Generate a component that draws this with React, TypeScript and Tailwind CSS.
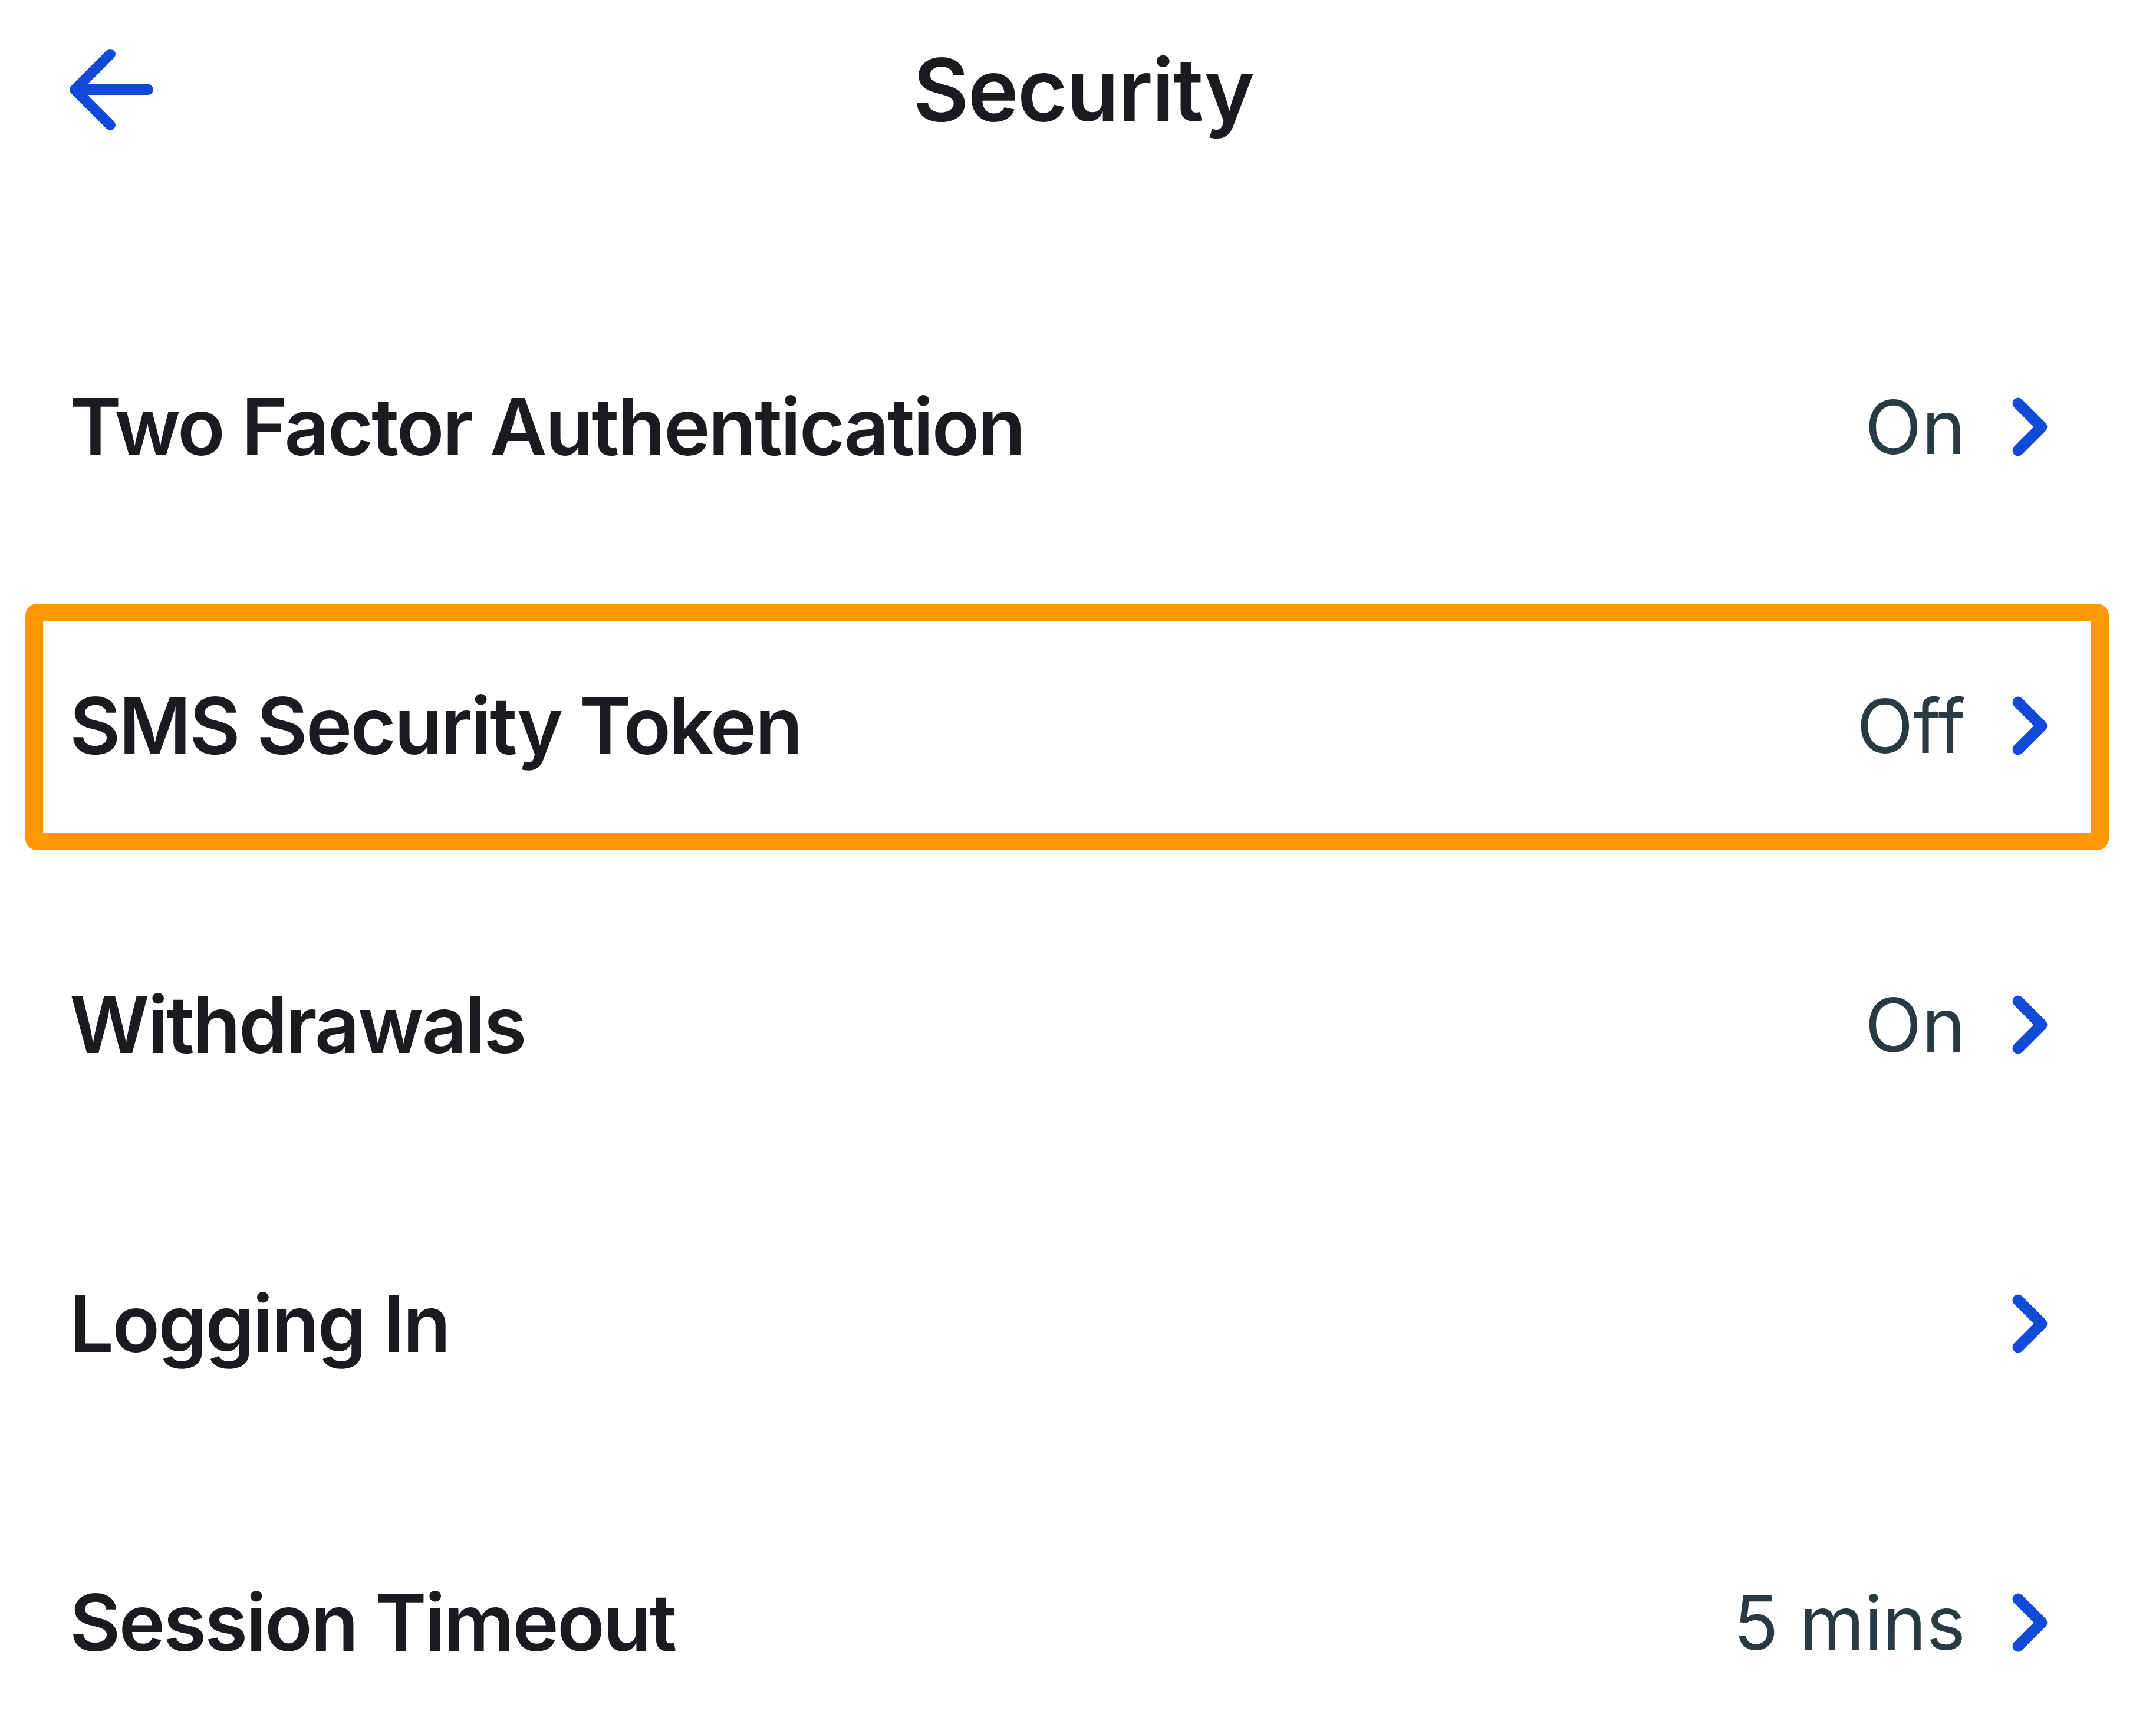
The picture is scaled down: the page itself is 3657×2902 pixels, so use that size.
import React from "react";

function Chevron() {
  return (
    <svg width="60" height="100" viewBox="0 0 60 100" fill="none" className="shrink-0">
      <polyline points="10,10 50,50 10,90" stroke="#1149d8" strokeWidth="19" strokeLinecap="round" strokeLinejoin="round" />
    </svg>
  );
}

function BackArrow() {
  return (
    <svg width="142" height="138" viewBox="0 0 142 138" fill="none">
      <path d="M133 69H9M69 9L9 69L69 129" stroke="#1149d8" strokeWidth="18" strokeLinecap="round" strokeLinejoin="round" />
    </svg>
  );
}

type Row = { label: string; value?: string; highlight?: boolean };

const rows: Row[] = [
  { label: "Two Factor Authentication", value: "On" },
  { label: "SMS Security Token", value: "Off", highlight: true },
  { label: "Withdrawals", value: "On" },
  { label: "Logging In" },
  { label: "Session Timeout", value: "5 mins" },
];

export default function App() {
  return (
    <div className="w-[3657px] h-[2902px] bg-white overflow-hidden" style={{ fontFamily: "Inter, 'Noto Sans', sans-serif" }}>
      <header className="relative h-[304px] flex items-center pl-[118px]">
        <BackArrow />
        <h1 className="absolute left-0 right-0 top-0 bottom-0 flex items-center justify-center text-[146px] font-semibold text-[#1a1b1f] tracking-[-2px] pl-[18px]">
          Security
        </h1>
      </header>
      <div className="pt-[166px] flex flex-col">
        {rows.map((r) => (
          <div key={r.label} className="relative h-[507px] flex items-center pl-[118px] pr-[184px]">
            {r.highlight && (
              <div className="absolute left-[43px] right-[80px] top-[47px] bottom-[42px] border-[30px] border-[#fe9800] rounded-[20px] pointer-events-none" />
            )}
            <span className="flex-1 text-[133px] font-semibold text-[#1a1b1f] leading-none tracking-[-3px]">{r.label}</span>
            {r.value && (
              <span className="text-[126px] font-normal text-[#2a3a42] leading-none mr-[79px]">{r.value}</span>
            )}
            <Chevron />
          </div>
        ))}
      </div>
    </div>
  );
}
